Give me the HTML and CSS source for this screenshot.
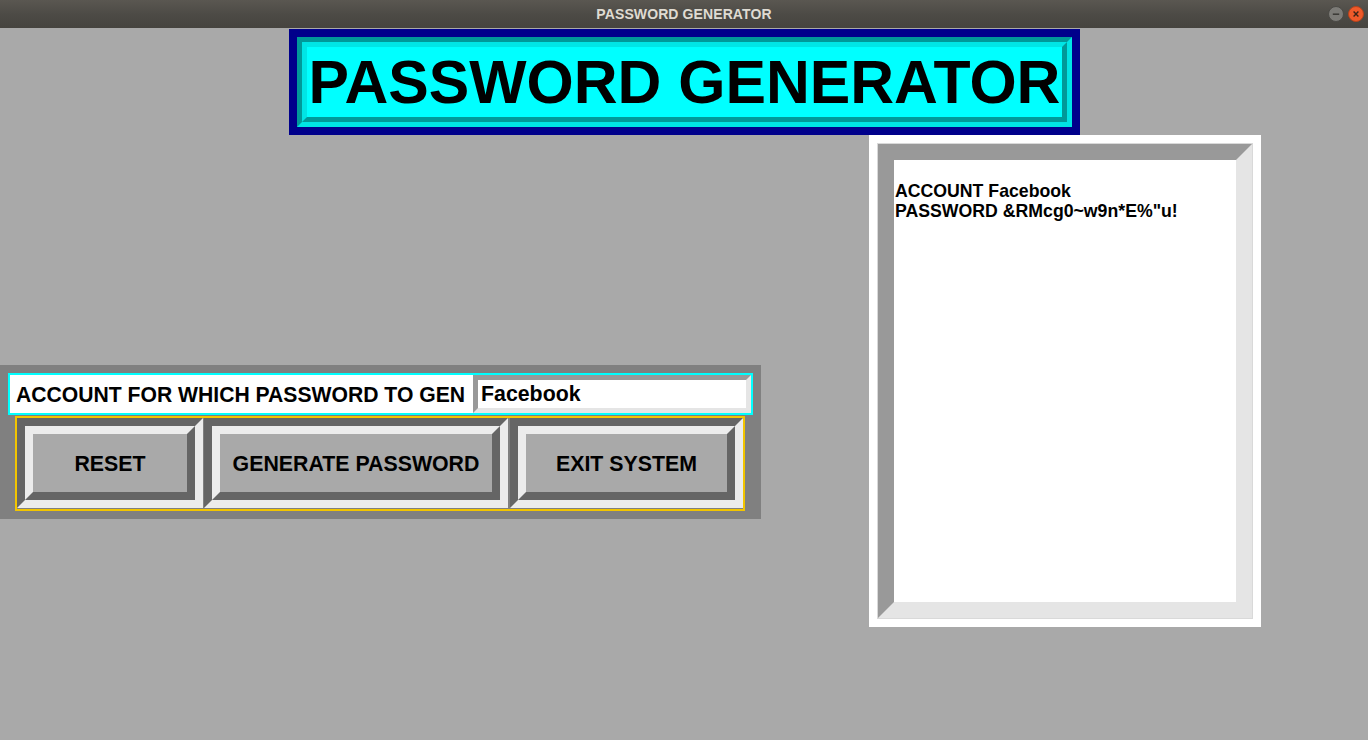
FILE: index.html
```html
<!DOCTYPE html>
<html lang="en">
<head>
<meta charset="utf-8">
<title>PASSWORD GENERATOR</title>
<link rel="stylesheet" href="styles.css">
</head>
<body>
<div class="window">
  <div class="titlebar">
    <span class="title">PASSWORD GENERATOR</span>
    <div class="controls">
      <span class="ctl ctl-min">
        <svg width="16" height="16" viewBox="0 0 16 16"><circle cx="8" cy="8" r="7.5" fill="#7c7b77" stroke="#4a4945" stroke-width="1"/><path d="M4.8 8.2h6.4" stroke="#3a3935" stroke-width="1.5"/></svg>
      </span>
      <span class="ctl ctl-close">
        <svg width="16" height="16" viewBox="0 0 16 16"><circle cx="8" cy="8" r="7.5" fill="#ef5a2a" stroke="#b8431c" stroke-width="1"/><path d="M5.6 5.6l4.8 4.8M10.4 5.6l-4.8 4.8" stroke="#3a2418" stroke-width="1.4"/></svg>
      </span>
    </div>
  </div>
  <div class="content">
    <div class="header-row">
      <div class="header">
        <div class="groove-out">
          <div class="groove-in">
            <h1 class="heading">PASSWORD GENERATOR</h1>
          </div>
        </div>
      </div>
    </div>
    <div class="main">
      <div class="left">
        <div class="panel">
          <div class="account-row">
            <div class="acc-label">ACCOUNT FOR WHICH PASSWORD TO GEN</div>
            <div class="entry">Facebook</div>
          </div>
          <div class="btn-frame">
            <div class="btn btn-reset"><div class="btn-in">RESET</div></div>
            <div class="btn btn-gen"><div class="btn-in">GENERATE PASSWORD</div></div>
            <div class="btn btn-exit"><div class="btn-in">EXIT SYSTEM</div></div>
          </div>
        </div>
      </div>
      <div class="output">
        <div class="out-hl">
          <div class="out-sunken">
            <div class="out-text">
              <div class="out-line">ACCOUNT Facebook</div>
              <div class="out-line">PASSWORD &amp;RMcg0~w9n*E%"u!</div>
            </div>
          </div>
        </div>
      </div>
    </div>
  </div>
</div>
</body>
</html>
```

FILE: styles.css
```css
* { box-sizing: border-box; }

html, body {
  margin: 0;
  padding: 0;
  width: 1368px;
  height: 740px;
  overflow: hidden;
  font-family: "Liberation Sans", Arial, sans-serif;
}

.window {
  width: 1368px;
  height: 740px;
  display: flex;
  flex-direction: column;
}

.titlebar {
  position: relative;
  height: 28px;
  flex: 0 0 28px;
  background: linear-gradient(to bottom, #5a5751 0%, #4d4b46 50%, #46443f 100%);
  display: flex;
  align-items: center;
  justify-content: center;
}

.title {
  color: #dfdbd2;
  font-family: "Liberation Sans", Arial, sans-serif;
  font-weight: bold;
  font-size: 14px;
  letter-spacing: 0.1px;
}

.controls {
  position: absolute;
  right: 4px;
  top: 6px;
  display: flex;
  gap: 4px;
}

.ctl {
  width: 16px;
  height: 16px;
  display: block;
}

.ctl svg { display: block; }

.content {
  flex: 1;
  background: #a9a9a9;
  display: flex;
  flex-direction: column;
}

.header-row {
  display: flex;
  justify-content: center;
  padding-top: 1px;
  padding-left: 1px;
}

.header {
  width: 791px;
  height: 106px;
  background: #00008b;
  padding: 8px;
}

.groove-out {
  height: 100%;
  border: 5px solid;
  border-color: #009999 #00e5e5 #00e5e5 #009999;
}

.groove-in {
  height: 100%;
  border: 5px solid;
  border-color: #00e5e5 #009999 #009999 #00e5e5;
  background: #00ffff;
}

.heading {
  margin: 0;
  height: 100%;
  font-size: 60.7px;
  line-height: 70px;
  font-weight: bold;
  text-align: center;
  color: #000;
  white-space: nowrap;
}

.main {
  display: flex;
  align-items: flex-start;
}

.left {
  width: 761px;
  padding-top: 230px;
}

.panel {
  width: 761px;
  height: 154px;
  background: #808080;
  padding: 8px;
}

.account-row {
  width: 745px;
  height: 42px;
  border: 2px solid #00ffff;
  display: flex;
}

.acc-label {
  width: 463px;
  height: 38px;
  background: #ffffff;
  font-size: 21.15px;
  font-weight: bold;
  line-height: 39px;
  padding-left: 6px;
  white-space: nowrap;
  overflow: hidden;
  color: #000;
}

.entry {
  flex: 1;
  height: 38px;
  background: #ffffff;
  border: 5px solid;
  border-color: #999999 #e5e5e5 #e5e5e5 #999999;
  font-size: 21.33px;
  font-weight: bold;
  line-height: 29px;
  padding-left: 3px;
  color: #000;
}

.btn-frame {
  margin-top: 1px;
  margin-left: 7px;
  width: 730px;
  height: 95px;
  border: 2px solid #f2c500;
  display: flex;
  align-items: flex-start;
}

.btn {
  height: 90px;
  border: 8px solid;
  border-color: #656565 #ececec #ececec #656565;
}

.btn-reset { width: 186px; }
.btn-gen { width: 304px; margin-left: 1px; }
.btn-exit { width: 233px; margin-left: 2px; }

.btn-in {
  height: 100%;
  border: 8px solid;
  border-color: #ececec #656565 #656565 #ececec;
  background: #a9a9a9;
  display: flex;
  align-items: center;
  justify-content: center;
  padding-top: 2px;
  font-size: 21.33px;
  font-weight: bold;
  color: #000;
  white-space: nowrap;
}

.output {
  margin-left: 108px;
  width: 392px;
  height: 492px;
  background: #ffffff;
  padding: 8px;
}

.out-hl {
  height: 100%;
  border: 1px solid #d9d9d9;
}

.out-sunken {
  height: 100%;
  border: 16px solid;
  border-color: #999999 #e5e5e5 #e5e5e5 #999999;
  background: #ffffff;
}

.out-text {
  padding-top: 21px;
  padding-left: 1px;
  font-size: 17.7px;
  font-weight: bold;
  line-height: 20px;
  color: #000;
}

.out-line {
  white-space: pre;
}
```
